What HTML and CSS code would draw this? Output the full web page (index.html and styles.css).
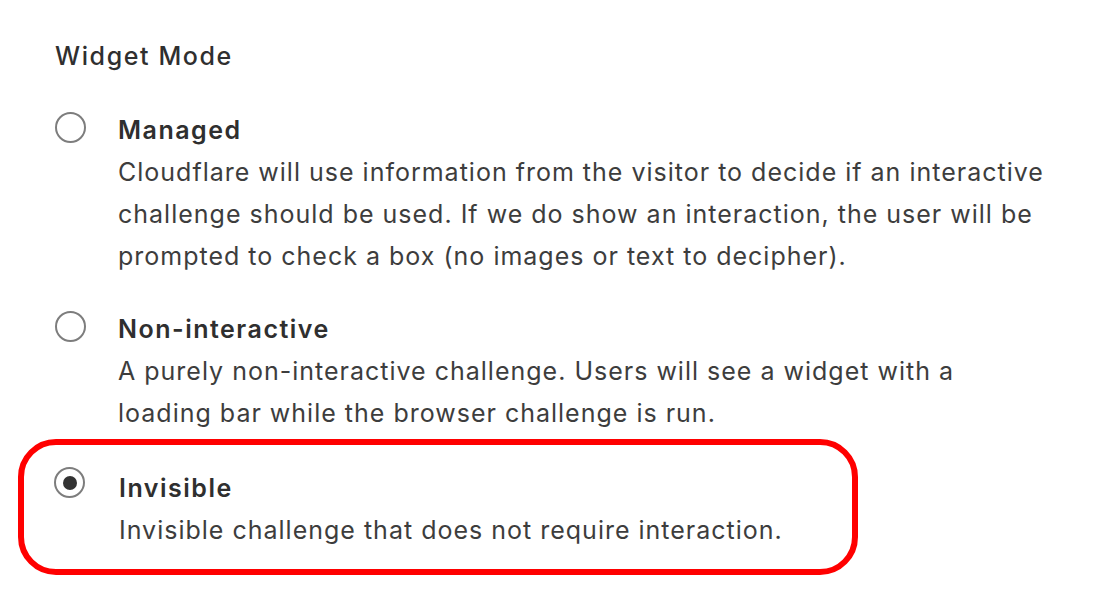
FILE: index.html
```html
<!DOCTYPE html>
<html lang="en">
<head>
<meta charset="utf-8">
<title>Widget Mode</title>
<link rel="stylesheet" href="styles.css">
</head>
<body>
<div class="page">
  <div class="title">Widget Mode</div>
  <div class="options">
    <div class="option">
      <span class="radio"></span>
      <div class="text">
        <div class="label">Managed</div>
        <div class="desc">Cloudflare will use information from the visitor to decide if an interactive challenge should be used. If we do show an interaction, the user will be prompted to check a box (no images or text to decipher).</div>
      </div>
    </div>
    <div class="option">
      <span class="radio"></span>
      <div class="text">
        <div class="label">Non-interactive</div>
        <div class="desc">A purely non-interactive challenge. Users will see a widget with a loading bar while the browser challenge is run.</div>
      </div>
    </div>
    <div class="option option-highlight">
      <span class="radio radio-checked"></span>
      <div class="text">
        <div class="label">Invisible</div>
        <div class="desc">Invisible challenge that does not require interaction.</div>
      </div>
    </div>
  </div>
</div>
</body>
</html>
```
FILE: styles.css
```css
html, body {
  margin: 0;
  background: #ffffff;
}
body {
  font-family: Inter, "Noto Sans", "Liberation Sans", sans-serif;
  color: #333333;
  letter-spacing: 1px;
}
.page {
  padding: 35px 0 0 55px;
}
.title {
  font-size: 25px;
  line-height: 42px;
  font-weight: 500;
  color: #2f2f2f;
  letter-spacing: 1.6px;
}
.options {
  margin-top: 32px;
  display: flex;
  flex-direction: column;
  gap: 31px;
}
.option {
  display: flex;
  gap: 32px;
  align-items: flex-start;
}
.radio {
  flex: none;
  box-sizing: border-box;
  width: 31px;
  height: 31px;
  margin-top: 3px;
  border: 2px solid #7d7d7d;
  border-radius: 50%;
  display: flex;
  align-items: center;
  justify-content: center;
}
.radio-checked::after {
  content: "";
  width: 14px;
  height: 14px;
  border-radius: 50%;
  background: #333333;
}
.text {
  width: 930px;
}
.label {
  font-size: 25px;
  line-height: 42px;
  font-weight: 600;
  color: #2f2f2f;
  letter-spacing: 1.5px;
}
.desc {
  font-size: 25px;
  line-height: 42px;
  font-weight: 400;
  color: #3d3d3d;
}
.option-highlight {
  width: 840px;
  box-sizing: border-box;
  margin: -26px 0 0 -37px;
  padding: 22px 0 18px 30px;
  border: 6px solid #ff0000;
  border-radius: 38px;
  gap: 34px;
}
.option-highlight .radio {
  margin-top: 0;
}
```
